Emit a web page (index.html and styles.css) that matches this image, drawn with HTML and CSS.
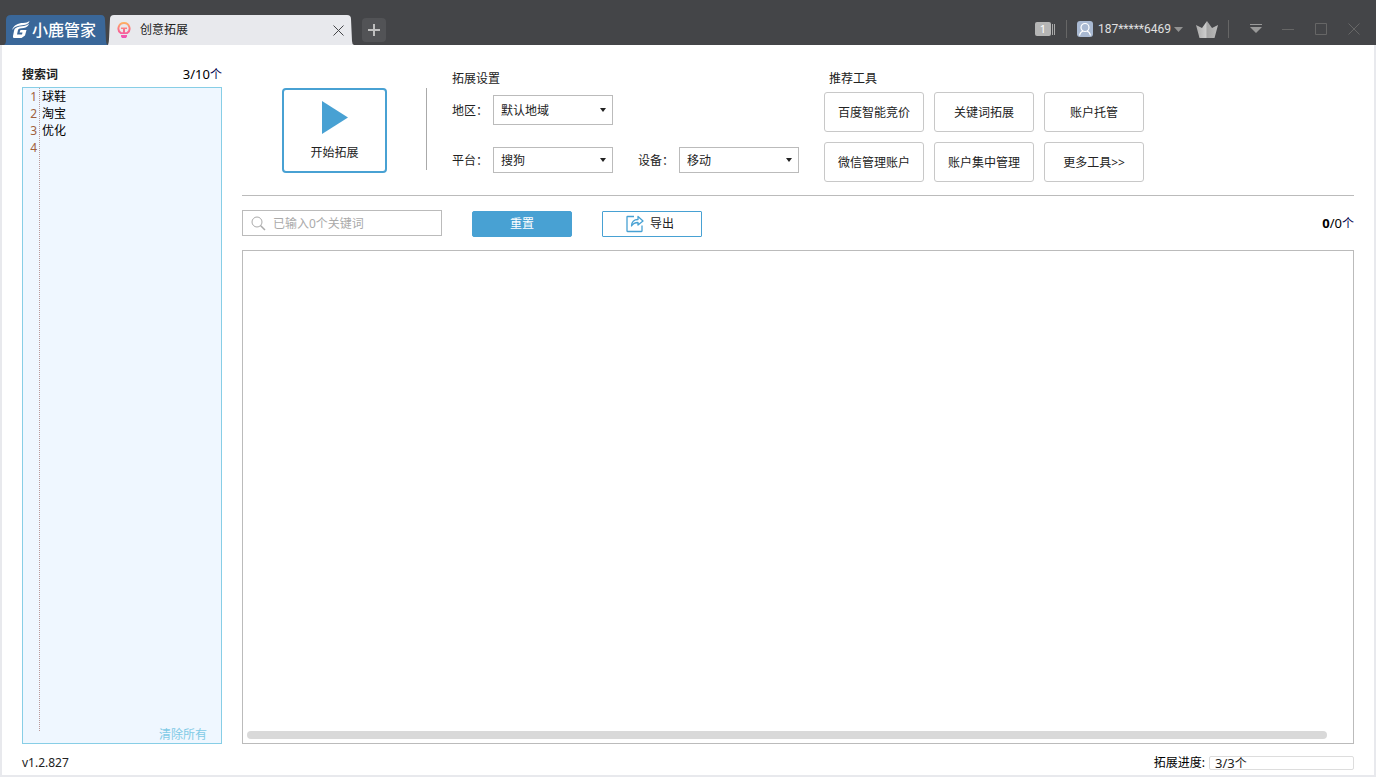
FILE: index.html
```html
<!DOCTYPE html>
<html lang="zh-CN">
<head>
<meta charset="utf-8">
<title>创意拓展</title>
<link rel="stylesheet" href="styles.css">
</head>
<body>
<div class="window">
  <header class="titlebar">
    <a class="brand" href="#">
      <svg class="tab-shape" viewBox="0 0 104 30" preserveAspectRatio="none"><path fill="#3a6799" d="M0 30Q2 29 2 25V5Q2 0 7 0H97Q101 0 101 5L102 26Q102 29 104 30Z"/></svg>
      <svg class="brand-mark" width="18" height="18" viewBox="0 0 18 18"><path fill="#fff" d="M0 9C2 4 6 2 11 2 14 2 16 1 17.500 0 17 2 15.500 3.500 12 4 7 4.500 3 5 0 9ZM3 7.500C6 5 9 5.500 12 5 14.500 4.500 16 3.500 17 2.500 16.500 5 14.500 6.500 11.500 7 8.500 7.300 6.500 7.500 6 9L5 13.500H10L10.500 11.500H7.500L8.500 9H14.500L13 14.500 9.500 17H2Q.500 17 1 15L2 10Q2.300 8.300 3 7.500Z"/></svg>
      <span>小鹿管家</span>
    </a>
    <div class="tab">
      <svg class="tab-shape" viewBox="0 0 246 30" preserveAspectRatio="none"><path fill="#e8e9ed" d="M0 30Q1 27 1 24L2 4Q2 0 6 0H239Q243 0 243 4L244 26Q244 29 246 30Z"/></svg>
      <svg width="14" height="16" viewBox="0 0 14 16"><defs><linearGradient id="bulb" x1="0" y1="0" x2="0" y2="1"><stop offset="0" stop-color="#ffb55f"/><stop offset=".5" stop-color="#fa6f8a"/><stop offset="1" stop-color="#f050b8"/></linearGradient></defs><path fill="url(#bulb)" fill-rule="evenodd" d="M7 0A6.500 6.500 0 0 1 10.500 12H3.500A6.500 6.500 0 0 1 7 0ZM7 2A4.500 4.500 0 0 0 4.500 10.300H6V7H4V5.500H10V7H8V10.300H9.500A4.500 4.500 0 0 0 7 2ZM4 13H10V14.500L9 16H5L4 14.500Z"/></svg>
      <span class="tab-name">创意拓展</span>
      <button class="plain" type="button" aria-label="关闭标签"><svg width="11" height="11" viewBox="0 0 11 11"><path stroke="#444548" d="M.5.500 10.500 10.500M10.500.500.500 10.500"/></svg></button>
    </div>
    <button class="new-tab" type="button" aria-label="新建标签"><svg width="12" height="12" viewBox="0 0 12 12"><path fill="#bfbfbf" d="M5 0h2v5h5v2H7v5H5V7H0V5h5z"/></svg></button>
    <div class="tools-right">
      <div class="pages"><span class="page-num">1</span><i></i><i></i></div>
      <span class="bar"></span>
      <button class="plain account" type="button">
        <svg width="16" height="16" viewBox="0 0 16 16"><rect width="16" height="16" rx="3" fill="#a9b9d2"/><g fill="none" stroke="#fff" stroke-width="1.200"><circle cx="8" cy="6.500" r="4"/><path d="M2.500 14.500C3 12 4.500 10.500 6 10M13.500 14.500C13 12 11.500 10.500 10 10"/></g></svg>
        <span>187*****6469</span>
        <svg class="caret" width="9" height="5" viewBox="0 0 9 5"><path fill="#929292" d="M0 0h9L4.500 5z"/></svg>
      </button>
      <svg class="crown" width="22" height="17" viewBox="0 0 22 17"><defs><linearGradient id="crown" x1="0" x2="1" y1="0" y2="0"><stop offset="0" stop-color="#aaa"/><stop offset=".45" stop-color="#ccc"/><stop offset=".5" stop-color="#a4a4a4"/><stop offset="1" stop-color="#bbb"/></linearGradient></defs><path fill="url(#crown)" d="M0 4 6 7 11 0 16 7 22 4 18.500 17H3.500Z"/></svg>
      <span class="bar"></span>
      <button class="plain win" type="button" aria-label="菜单"><svg width="12" height="10" viewBox="0 0 12 10"><path fill="#999" d="M0 0h12v1H0zM0 3h12L6 9z"/></svg></button>
      <button class="plain win minimize" type="button" aria-label="最小化"><svg width="12" height="12" viewBox="0 0 12 12"><path fill="#666" d="M0 6h12v1H0z"/></svg></button>
      <button class="plain win" type="button" aria-label="最大化"><svg width="12" height="12" viewBox="0 0 12 12"><path fill="none" stroke="#666" d="M.5.500h11v11H.5z"/></svg></button>
      <button class="plain win" type="button" aria-label="关闭"><svg width="12" height="12" viewBox="0 0 12 12"><path stroke="#666" d="M.5.500 11.500 11.500M11.500.500.500 11.500"/></svg></button>
    </div>
  </header>

  <div class="frame">
    <div class="content">
      <aside class="words">
        <div class="words-head"><label for="words">搜索词</label><span class="digits">3/10<span class="unit">个</span></span></div>
        <div class="editor">
          <ol class="lines"><li>1</li><li>2</li><li>3</li><li>4</li></ol>
          <textarea id="words" spellcheck="false">球鞋
淘宝
优化
</textarea>
          <button class="clear" type="button">清除所有</button>
        </div>
      </aside>
      <main class="main">
        <section class="setup">
          <button class="start" type="button"><svg width="26" height="33" viewBox="0 0 26 33"><path fill="#48a1d3" d="M0 0 26 16.500 0 33z"/></svg><span>开始拓展</span></button>
          <div class="settings">
            <h2>拓展设置</h2>
            <div class="field-row">
              <label for="region">地区：</label>
              <span class="select tall"><select id="region"><option>默认地域</option></select></span>
            </div>
            <div class="field-row">
              <label for="platform">平台：</label>
              <span class="select"><select id="platform"><option>搜狗</option></select></span>
              <label class="second" for="device">设备：</label>
              <span class="select"><select id="device"><option>移动</option></select></span>
            </div>
          </div>
          <div class="recommend">
            <h2>推荐工具</h2>
            <div class="tool-grid">
              <button type="button">百度智能竞价</button><button type="button">关键词拓展</button><button type="button">账户托管</button>
              <button type="button">微信管理账户</button><button type="button">账户集中管理</button><button type="button">更多工具&gt;&gt;</button>
            </div>
          </div>
        </section>
        <div class="toolbar">
          <label class="search"><svg width="15" height="15" viewBox="0 0 15 15"><g fill="none" stroke="#aaa"><circle cx="6" cy="6" r="5"/><path stroke-width="1.500" d="M9.500 9.500 14 14"/></g></svg><input type="text" aria-label="关键词" placeholder="已输入0个关键词"></label>
          <button class="reset" type="button">重置</button>
          <button class="export" type="button"><svg width="18" height="18" viewBox="0 0 18 18"><g fill="none" stroke="#48a1d3" stroke-width="1.300"><path d="M8 1.500H1.500Q1 1.500 1 2V16Q1 16.500 1.500 16.500H15.500Q16 16.500 16 16V10.500"/><path stroke-linejoin="round" d="M5.500 11C5.500 7 8 4.500 12 4.500V1.500L17 6 12 10V7.500C9 7.500 7 8.500 5.500 11Z"/></g></svg>导出</button>
          <span class="digits total"><b>0</b>/0<span class="unit">个</span></span>
        </div>
        <div class="results"><div class="thumb"></div></div>
      </main>
    </div>
    <footer class="status">
      <span>v1.2.827</span>
      <span class="progress-label">拓展进度:</span>
      <span class="progress digits">3/3<span class="unit">个</span></span>
    </footer>
  </div>
</div>
</body>
</html>
```

FILE: styles.css
```css
* { box-sizing: border-box; }
body {
  margin: 0;
  font: 12px/18px "Noto Sans", "Noto Sans CJK SC", sans-serif;
  color: #222;
  background: #fff;
}
button, select, input, textarea { font: inherit; color: inherit; margin: 0; }
button { padding: 0; cursor: pointer; }
svg { display: block; flex: none; }
h2 { margin: 0; font-size: 12px; font-weight: 400; line-height: 20px; }

.window { min-height: 100vh; display: flex; flex-direction: column; padding-bottom: 1px; }

.titlebar {
  height: 45px;
  display: flex;
  align-items: flex-end;
  padding-left: 4px;
  background: #444548;
}
.brand, .tab {
  position: relative;
  display: flex;
  align-items: center;
  height: 30px;
  flex: none;
}
.tab-shape { position: absolute; inset: 0; width: 100%; height: 100%; z-index: 0; }
.brand > :not(.tab-shape), .tab > :not(.tab-shape) { position: relative; }
.brand {
  width: 104px;
  padding-left: 8px;
  gap: 2px;
  color: #fff;
  font-size: 16px;
  font-weight: 500;
  text-decoration: none;
}
.tab { width: 246px; padding: 0 10px 0 9px; }
.tab-name { flex: 1; padding-left: 9px; }
.plain { border: 0; background: none; }
.new-tab {
  width: 24px;
  height: 24px;
  margin: 0 0 3px 8px;
  border: 0;
  border-radius: 4px;
  background: #525356;
  display: grid;
  place-items: center;
}
.tools-right {
  display: flex;
  align-items: center;
  height: 32px;
  margin-left: auto;
  padding-right: 16px;
}
.pages { display: flex; gap: 1px; align-items: center; margin-right: 11px; }
.page-num {
  width: 16px;
  height: 14px;
  border-radius: 2px;
  background: #b5b5b5;
  color: #fff;
  font-size: 11px;
  line-height: 14px;
  text-align: center;
}
.pages i { width: 1px; height: 11px; background: #aaa; }
.bar { width: 1px; height: 18px; background: #666; }
.account {
  display: flex;
  align-items: center;
  margin-left: 10px;
  font-family: Roboto, "Noto Sans", sans-serif;
  color: #e0e0e0;
}
.account span { margin-left: 5px; }
.caret { margin-left: 3px; }
.crown { margin: 0 10px 0 13px; }
.win { margin-left: 21px; }
.minimize { margin-left: 20px; }

.frame {
  flex: 1;
  display: flex;
  flex-direction: column;
  padding: 0 20px;
  border: solid #e8e9ed;
  border-width: 0 2px 2px;
}
.content { flex: 1; display: grid; grid-template-columns: 200px 1fr; gap: 20px; }
.words, .main { display: flex; flex-direction: column; min-width: 0; }
.words-head {
  display: flex;
  justify-content: space-between;
  align-items: flex-end;
  height: 42px;
  padding-bottom: 3px;
}
.words-head label { font-weight: 700; }
.digits { font-size: 13px; }
.unit { font-size: 12px; color: #00004d; }
.words-head .digits, .total { color: #000; }
.editor {
  position: relative;
  flex: 1;
  display: flex;
  border: 1px solid #87cee6;
  background: #eff7ff;
}
.lines {
  list-style: none;
  width: 17px;
  margin: 0 0 12px;
  padding: 0 2px 0 0;
  border-right: 1px dotted #b99;
  color: #a0603c;
  line-height: 17px;
  text-align: right;
}
.editor textarea {
  flex: 1;
  min-width: 0;
  padding: 0 2px;
  border: 0;
  outline: 0;
  resize: none;
  background: none;
  color: #000;
  line-height: 17px;
}
.clear {
  position: absolute;
  right: 14px;
  bottom: 0;
  border: 0;
  background: none;
  color: #7fcae6;
  line-height: 16px;
}

.setup {
  display: flex;
  align-items: flex-start;
  height: 151px;
  padding: 24px 0 0 40px;
  border-bottom: 1px solid #bbb;
}
.start {
  width: 105px;
  height: 85px;
  margin-top: 19px;
  padding-top: 2px;
  border: 2px solid #48a1d3;
  border-radius: 4px;
  background: #fff;
  display: flex;
  flex-direction: column;
  align-items: center;
  justify-content: center;
  gap: 10px;
}
.settings { position: relative; width: 373px; margin-left: 39px; padding-left: 26px; }
.settings::before {
  content: "";
  position: absolute;
  left: 0;
  top: 19px;
  width: 1px;
  height: 82px;
  background: #aaa;
}
.field-row { display: flex; align-items: center; margin-top: 6px; }
.field-row + .field-row { margin-top: 22px; }
.field-row label { width: 41px; padding-top: 2px; }
.field-row .second { margin-left: 25px; }
.select { position: relative; width: 120px; height: 26px; }
.select::after {
  content: "";
  position: absolute;
  right: 7px;
  top: 50%;
  margin-top: -2px;
  border: solid transparent;
  border-width: 4px 3px 0;
  border-top-color: #222;
  pointer-events: none;
}
.tall { height: 30px; }
.select select {
  appearance: none;
  width: 100%;
  height: 100%;
  padding: 1px 20px 0 7px;
  border: 1px solid #bbb;
  border-radius: 0;
  background: #fff;
}
.recommend { margin-left: 25px; }
.recommend h2 { padding-left: 5px; margin-bottom: 3px; }
.tool-grid { display: grid; grid-template-columns: repeat(3, 100px); grid-auto-rows: 40px; gap: 10px; }
.tool-grid button { padding-top: 2px; border: 1px solid #c8c8c8; border-radius: 3px; background: #fff; }

.toolbar { display: flex; align-items: center; gap: 30px; height: 54px; padding-top: 1px; }
.search {
  display: flex;
  align-items: center;
  gap: 7px;
  width: 200px;
  height: 26px;
  padding-left: 8px;
  margin-bottom: 1px;
  border: 1px solid #bbb;
}
.search input { flex: 1; min-width: 0; padding: 2px 0 0; border: 0; outline: 0; background: none; }
.search input::placeholder { color: #aaa; }
.reset, .export {
  width: 100px;
  height: 26px;
  border: 1px solid #48a1d3;
  border-radius: 2px;
  background: #48a1d3;
  color: #fff;
}
.export {
  display: flex;
  align-items: center;
  justify-content: center;
  gap: 6px;
  padding-right: 4px;
  border-radius: 1px;
  background: #fff;
  color: #222;
}
.total { margin-left: auto; }
.results { flex: 1; display: flex; align-items: flex-end; padding: 4px; border: 1px solid #bbb; }
.thumb { width: 98%; height: 8px; border-radius: 4px; background: #d9d9d9; }

.status { display: flex; align-items: center; height: 31px; padding-top: 7px; }
.progress-label { margin-left: auto; color: #000; }
.progress {
  width: 145px;
  height: 14px;
  margin-left: 4px;
  padding-left: 5px;
  border: 1px solid #ddd;
  border-radius: 2px;
  line-height: 12px;
}
.progress .unit { color: inherit; }
```
